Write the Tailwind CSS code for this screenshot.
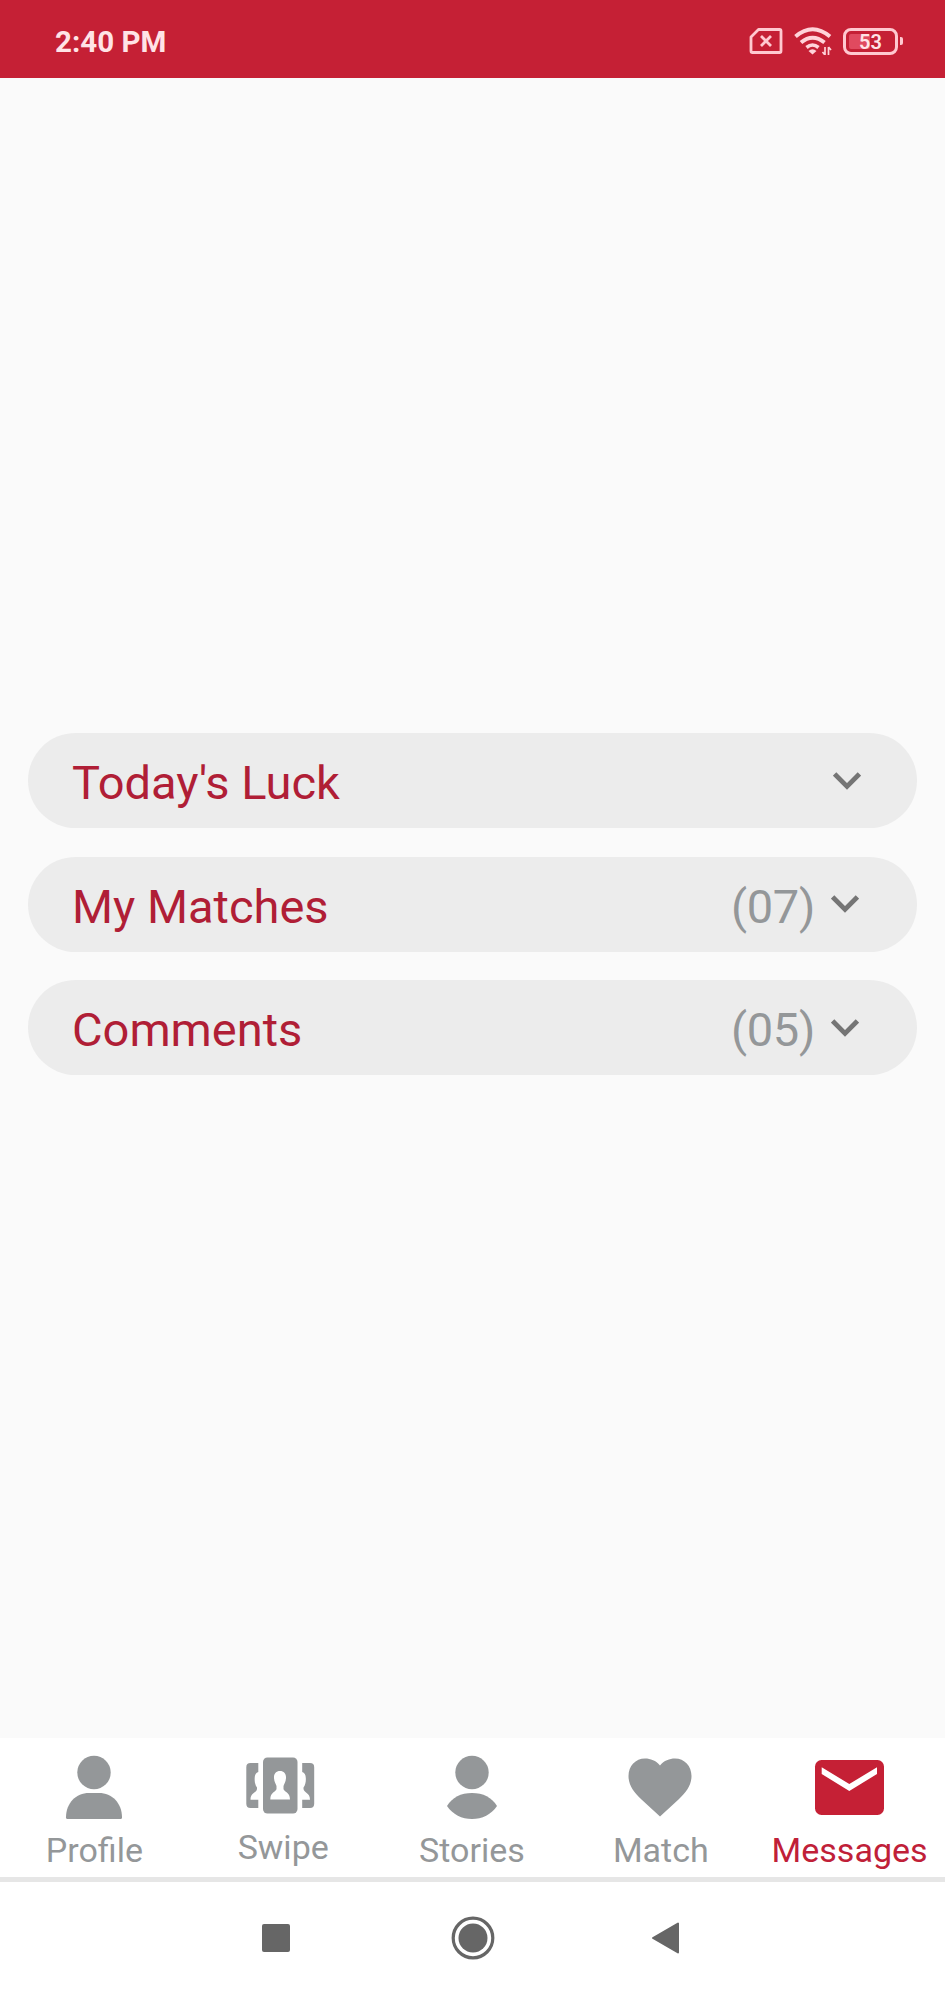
<!DOCTYPE html>
<html lang="en">
<head>
  <meta charset="UTF-8" />
  <meta name="viewport" content="width=device-width, initial-scale=1.0"/>
  <title>Messages</title>
  <script src="https://cdn.jsdelivr.net/npm/@tailwindcss/browser@4"></script>
</head>
<body class="bg-[#fafafa] font-['Roboto',sans-serif] w-[945px] h-[1995px] flex flex-col overflow-hidden">

  <!-- Status bar -->
  <header class="h-[78px] shrink-0 bg-[#c52035] flex items-center justify-between pl-[55px] pr-[42px] pt-[4px]">
    <span class="text-[29.5px] leading-none font-bold text-[#ffe3e6] pt-[3px]">2:40 PM</span>
    <div class="flex items-center gap-[11px]">
      <svg class="w-[34px] h-[28px]" viewBox="0 0 34 28" fill="none" stroke="#ffc9d0" stroke-width="2.800">
        <path d="M9.500 2.500H30.500Q32 2.500 32 4V24Q32 25.500 30.500 25.500H3.500Q2 25.500 2 24V10Z" stroke-linejoin="round"/>
        <path d="M12 9L22 19M22 9L12 19"/>
      </svg>
      <svg class="w-[38px] h-[28px]" viewBox="0 0 38 28" fill="none" stroke="#ffd3d9" stroke-width="4">
        <path d="M1.500 9.500Q18.500 -5 36 9.500"/>
        <path d="M7 15.500Q18.500 6 30.500 15.500"/>
        <path d="M12.500 20.500Q18.500 15.500 24.500 20.500" stroke-width="3.600"/>
        <path d="M14.500 24Q18.500 20.500 22.500 24L18.500 27.500Z" fill="#ffd3d9" stroke="none"/>
        <path d="M31 20V28M34.500 20V28M28.500 25L31 28M37 23L34.500 20" stroke-width="1.700"/>
      </svg>
      <div class="flex items-center gap-[2px]">
        <div class="relative w-[55px] h-[27px] rounded-[8px] border-[3.500px] border-[#ffc9d0] flex items-center justify-center">
          <div class="absolute left-[3px] top-[3px] w-[21px] h-[15px] rounded-[2px] bg-[#e04a5f]"></div>
          <span class="relative text-[20px] leading-none font-semibold text-[#ffe3e6] pt-px">53</span>
        </div>
        <div class="w-[3px] h-[8px] rounded-r-[2px] bg-[#ffc9d0]"></div>
      </div>
    </div>
  </header>

  <!-- Sections -->
  <main class="flex-1 px-7 pt-[655px] flex flex-col gap-[28.5px] text-[47px] leading-none">
    <button type="button" class="h-[95px] shrink-0 rounded-full bg-[#ececec] flex items-center justify-between pl-[44px] pr-[56px]">
      <span class="text-[#b01e36] pt-[4px]">Today's Luck</span>
      <svg class="w-[28px] h-[18px]" viewBox="0 0 28 18" fill="none" stroke="#757575" stroke-width="4.800"><path d="M1.600 2L14 14.400L26.400 2"/></svg>
    </button>
    <button type="button" class="h-[95px] shrink-0 rounded-full bg-[#ececec] flex items-center justify-between pl-[44px] pr-[58px]">
      <span class="text-[#b01e36] pt-[4px]">My Matches</span>
      <span class="flex items-center gap-[16px]">
        <span class="text-[#949799] pt-[4px] tracking-[-0.3px]">(07)</span>
        <svg class="w-[28px] h-[18px]" viewBox="0 0 28 18" fill="none" stroke="#757575" stroke-width="4.800"><path d="M1.600 2L14 14.400L26.400 2"/></svg>
      </span>
    </button>
    <button type="button" class="h-[95px] shrink-0 rounded-full bg-[#ececec] flex items-center justify-between pl-[44px] pr-[58px]">
      <span class="text-[#b01e36] pt-[4px]">Comments</span>
      <span class="flex items-center gap-[16px]">
        <span class="text-[#949799] pt-[4px] tracking-[-0.3px]">(05)</span>
        <svg class="w-[28px] h-[18px]" viewBox="0 0 28 18" fill="none" stroke="#757575" stroke-width="4.800"><path d="M1.600 2L14 14.400L26.400 2"/></svg>
      </span>
    </button>
  </main>

  <!-- Tabs -->
  <nav class="h-[144px] shrink-0 bg-white border-b-[5px] border-[#e6e6e6] grid grid-cols-5 pt-[12px] pr-[1px] text-[34px] leading-none text-[#949799]">
    <a class="flex flex-col items-center gap-[13px]">
      <svg class="w-[80px] h-[70px]" viewBox="0 0 80 70" fill="#949799">
        <circle cx="40" cy="22.500" r="16.700"/>
        <path d="M12 67.500C12 53 22 43 35 43H45C58 43 68 53 68 67.500Q68 69 66.500 69H13.500Q12 69 12 67.500Z"/>
      </svg>
      <span>Profile</span>
    </a>
    <a class="flex flex-col items-center gap-[10px]">
      <svg class="w-[80px] h-[70px]" viewBox="0 0 80 70" fill="#949799">
        <rect x="20" y="7.500" width="34.500" height="56" rx="4.500"/>
        <path d="M37 21C41 21 43.300 24 43 28C42.800 32 41 34 40.500 36V39C41 42 47 42 47 49.500H27.300C27.300 42 33 42 33.500 39V36C33 34 31.200 32 31 28C30.700 24 33 21 37 21Z" fill="#fff"/>
        <path d="M15.300 13H7.500Q3.300 13 3.300 17.200V53.800Q3.300 58 7.500 58H15.300V49.700H7.500C7.500 42.500 13.500 43 14 39V37.500C12 35 11.500 31 11.700 28C11.800 24.500 13 22.500 15.300 22Z"/>
        <path d="M59.200 13H67Q71.200 13 71.200 17.200V53.800Q71.200 58 67 58H59.200V49.700H67C67 42.500 61 43 60.500 39V37.500C62.500 35 63 31 62.800 28C62.700 24.500 61.500 22.500 59.200 22Z"/>
      </svg>
      <span>Swipe</span>
    </a>
    <a class="flex flex-col items-center gap-[13px]">
      <svg class="w-[80px] h-[70px]" viewBox="0 0 80 70" fill="#949799">
        <circle cx="40" cy="22.500" r="16.700"/>
        <path d="M15 56C20 47.500 29 43 40 43S60 47.500 65 56C59.500 64.500 50 69 40 69S20.500 64.500 15 56Z"/>
      </svg>
      <span>Stories</span>
    </a>
    <a class="flex flex-col items-center gap-[13px]">
      <svg class="w-[80px] h-[70px]" viewBox="0 0 80 70" fill="#949799">
        <path d="M39 15.500C43 10.500 48.500 8.500 54 8.500C63.500 8.500 70.500 16 70.500 26C70.500 35.500 65 42.500 57.500 49.500L39 66.500L20.500 49.500C13 42.500 7.500 35.500 7.500 26C7.500 16 14.500 8.500 24 8.500C29.500 8.500 35 10.500 39 15.500Z"/>
      </svg>
      <span>Match</span>
    </a>
    <a class="flex flex-col items-center gap-[13px] text-[#c02038]">
      <svg class="w-[80px] h-[70px]" viewBox="0 0 80 70">
        <rect x="5" y="10" width="69" height="55" rx="6.500" fill="#c52035"/>
        <path d="M11.700 17.300L39.300 34L67 17.300V24L39.300 41L11.700 24Z" fill="#fff"/>
      </svg>
      <span>Messages</span>
    </a>
  </nav>

  <!-- System buttons -->
  <div class="h-[113px] shrink-0 bg-white flex items-center pl-[262px] pb-px gap-[161px]">
    <div class="w-[28px] h-[28px] rounded-[2px] bg-[#666]"></div>
    <svg class="w-[44px] h-[44px]" viewBox="0 0 44 44">
      <circle cx="22" cy="22" r="19.800" fill="none" stroke="#666" stroke-width="3.200"/>
      <circle cx="22" cy="22" r="14.500" fill="#666"/>
    </svg>
    <svg class="w-[28px] h-[34px] -ml-[5px]" viewBox="0 0 28 34"><path d="M2 17L27 2.500V31.500Z" fill="#666" stroke="#666" stroke-width="2" stroke-linejoin="round"/></svg>
  </div>
</body>
</html>
